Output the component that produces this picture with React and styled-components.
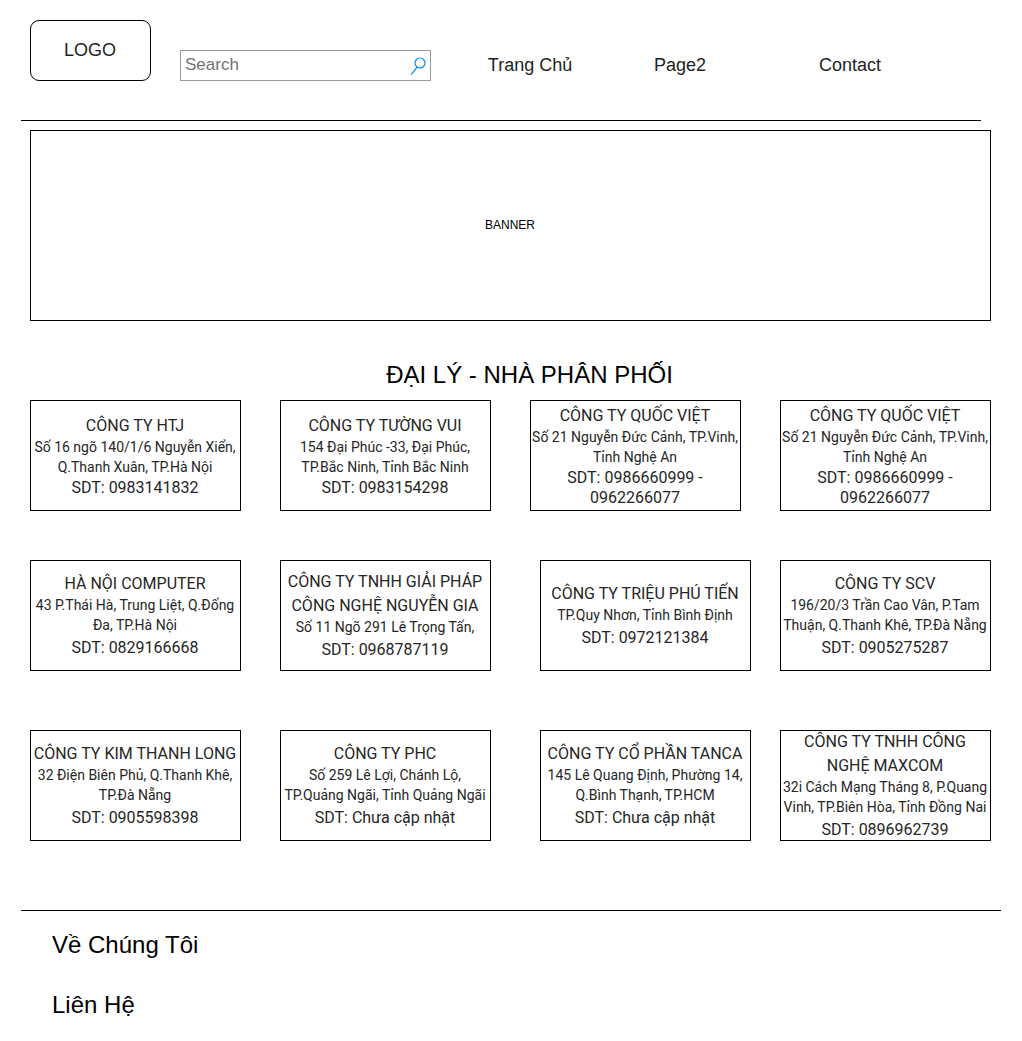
import React from "react";
import styled, { createGlobalStyle } from "styled-components";

const GlobalStyle = createGlobalStyle`
  *, *::before, *::after { box-sizing: border-box; }
  body {
    margin: 0;
    background: #fff;
    color: #000;
    font-family: "Liberation Sans", Arial, sans-serif;
  }
`;

const Page = styled.div`
  padding: 20px 31px 20px 30px;
`;

const Header = styled.header`
  display: flex;
  align-items: flex-end;
  height: 61px;
`;

const Logo = styled.div`
  display: flex;
  align-items: center;
  justify-content: center;
  width: 121px;
  height: 61px;
  padding-right: 1px;
  border: 1px solid #000;
  border-radius: 9px;
  color: #1f1f1f;
  font-size: 18px;
`;

const SearchBox = styled.form`
  display: flex;
  align-items: center;
  width: 251px;
  height: 31px;
  margin-left: 29px;
  border: 1px solid #999;
`;

const SearchInput = styled.input`
  flex: 1;
  min-width: 0;
  height: 100%;
  padding: 0 4px 2px;
  border: 0;
  outline: 0;
  background: transparent;
  color: #333;
  font: 17px "Liberation Sans", Arial, sans-serif;

  &::placeholder {
    color: #737373;
    opacity: 1;
  }
`;

const SearchButton = styled.button`
  display: flex;
  padding: 0;
  margin-right: 3px;
  border: 0;
  background: none;
  cursor: pointer;
`;

const Nav = styled.nav`
  display: grid;
  grid-template-columns: 140px 160px 180px;
  margin-left: 29px;
`;

const NavLink = styled.a`
  color: #1f1f1f;
  font-size: 18px;
  line-height: 32px;
  text-align: center;
  text-decoration: none;
`;

const Divider = styled.hr`
  height: 1px;
  margin: ${(p) => p.$top}px ${(p) => p.$right}px 0 -9px;
  border: 0;
  background: #000;
`;

const Banner = styled.section`
  display: flex;
  align-items: center;
  justify-content: center;
  height: 191px;
  margin-top: 9px;
  padding: 0 1px 2px 0;
  border: 1px solid #000;
  font-size: 12px;
`;

const SectionTitle = styled.h1`
  margin: 38px 0 10px;
  padding-left: 38px;
  font-size: 24px;
  font-weight: 400;
  line-height: 31px;
  text-align: center;
`;

const Dealers = styled.div`
  font-family: Roboto, "Liberation Sans", sans-serif;
  color: #262626;
`;

const DealerRow = styled.div`
  display: grid;
  grid-template-columns: ${(p) =>
    p.$gaps.map((gap) => `1fr ${gap}px`).join(" ")} 1fr;
  margin-top: ${(p) => p.$top}px;

  > :nth-child(2) { grid-column: 3; }
  > :nth-child(3) { grid-column: 5; }
  > :nth-child(4) { grid-column: 7; }
`;

const Card = styled.article`
  display: flex;
  flex-direction: column;
  justify-content: center;
  min-width: 0;
  height: 111px;
  padding-right: 1px;
  border: 1px solid #000;
  text-align: center;
`;

const DealerName = styled.h2`
  margin: 0;
  font-size: 16px;
  font-weight: 400;
  line-height: 24px;
`;

const Address = styled.p`
  margin: -1px 0 1px;
  font-size: 14px;
  line-height: 20px;
`;

const Phone = styled.p`
  margin: 0;
  font-size: 16px;
  line-height: ${(p) => p.$line}px;
`;

const Footer = styled.footer`
  display: flex;
  flex-direction: column;
  align-items: flex-start;
  gap: 30px;
  padding: 19px 0 0 22px;
`;

const FooterLink = styled.a`
  color: #000;
  font-size: 24px;
  line-height: 30px;
  text-decoration: none;
`;

const quocViet = [
  "CÔNG TY QUỐC VIỆT",
  ["Số 21 Nguyễn Đức Cảnh, TP.Vinh,", "Tỉnh Nghệ An"],
  ["0986660999 -", "0962266077"],
];

const rows = [
  {
    top: 0,
    line: 20,
    gaps: [39, 39, 39],
    dealers: [
      ["CÔNG TY HTJ", ["Số 16 ngõ 140/1/6 Nguyễn Xiển,", "Q.Thanh Xuân, TP.Hà Nội"], ["0983141832"]],
      ["CÔNG TY TƯỜNG VUI", ["154 Đại Phúc -33, Đại Phúc,", "TP.Bắc Ninh, Tỉnh Bắc Ninh"], ["0983154298"]],
      quocViet,
      quocViet,
    ],
  },
  {
    top: 49,
    line: 24,
    gaps: [39, 49, 29],
    dealers: [
      ["HÀ NỘI COMPUTER", ["43 P.Thái Hà, Trung Liệt, Q.Đống", "Đa, TP.Hà Nội"], ["0829166668"]],
      ["CÔNG TY TNHH GIẢI PHÁP CÔNG NGHỆ NGUYỄN GIA", ["Số 11 Ngõ 291 Lê Trọng Tấn,"], ["0968787119"]],
      ["CÔNG TY TRIỆU PHÚ TIẾN", ["TP.Quy Nhơn, Tỉnh Bình Định"], ["0972121384"]],
      ["CÔNG TY SCV", ["196/20/3 Trần Cao Vân, P.Tam", "Thuận, Q.Thanh Khê, TP.Đà Nẵng"], ["0905275287"]],
    ],
  },
  {
    top: 59,
    line: 24,
    gaps: [39, 49, 29],
    dealers: [
      ["CÔNG TY KIM THANH LONG", ["32 Điện Biên Phủ, Q.Thanh Khê,", "TP.Đà Nẵng"], ["0905598398"]],
      ["CÔNG TY PHC", ["Số 259 Lê Lợi, Chánh Lộ,", "TP.Quảng Ngãi, Tỉnh Quảng Ngãi"], ["Chưa cập nhật"]],
      ["CÔNG TY CỔ PHẦN TANCA", ["145 Lê Quang Định, Phường 14,", "Q.Bình Thạnh, TP.HCM"], ["Chưa cập nhật"]],
      ["CÔNG TY TNHH CÔNG NGHỆ MAXCOM", ["32i Cách Mạng Tháng 8, P.Quang", "Vinh, TP.Biên Hòa, Tỉnh Đồng Nai"], ["0896962739"]],
    ],
  },
];

const Lines = ({ items }) =>
  items.map((text, i) => (
    <React.Fragment key={text}>
      {i > 0 && <br />}
      {text}
    </React.Fragment>
  ));

export default function App() {
  return (
    <>
      <GlobalStyle />
      <Page>
        <Header>
          <Logo>LOGO</Logo>
          <SearchBox role="search" onSubmit={(e) => e.preventDefault()}>
            <SearchInput type="text" placeholder="Search" aria-label="Search" />
            <SearchButton type="submit" aria-label="Search">
              <svg width="18" height="20" viewBox="0 0 18 20" fill="none" stroke="#008cff">
                <circle cx="11" cy="7" r="5" strokeWidth="1.2" />
                <path d="M8 11.2L2.2 18.6" strokeWidth="1.2" />
              </svg>
            </SearchButton>
          </SearchBox>
          <Nav>
            <NavLink href="#home">Trang Chủ</NavLink>
            <NavLink href="#page2">Page2</NavLink>
            <NavLink href="#contact">Contact</NavLink>
          </Nav>
        </Header>
        <Divider $top={39} $right={10} />
        <main>
          <Banner>BANNER</Banner>
          <SectionTitle>ĐẠI LÝ - NHÀ PHÂN PHỐI</SectionTitle>
          <Dealers>
            {rows.map((row) => (
              <DealerRow key={row.top} $top={row.top} $gaps={row.gaps}>
                {row.dealers.map(([name, address, phone], i) => (
                  <Card key={i}>
                    <DealerName>{name}</DealerName>
                    <Address><Lines items={address} /></Address>
                    <Phone $line={row.line}>
                      SDT: <Lines items={phone} />
                    </Phone>
                  </Card>
                ))}
              </DealerRow>
            ))}
          </Dealers>
        </main>
        <Divider $top={69} $right={-10} />
        <Footer>
          <FooterLink href="#about">Về Chúng Tôi</FooterLink>
          <FooterLink href="#contact">Liên Hệ</FooterLink>
        </Footer>
      </Page>
    </>
  );
}
